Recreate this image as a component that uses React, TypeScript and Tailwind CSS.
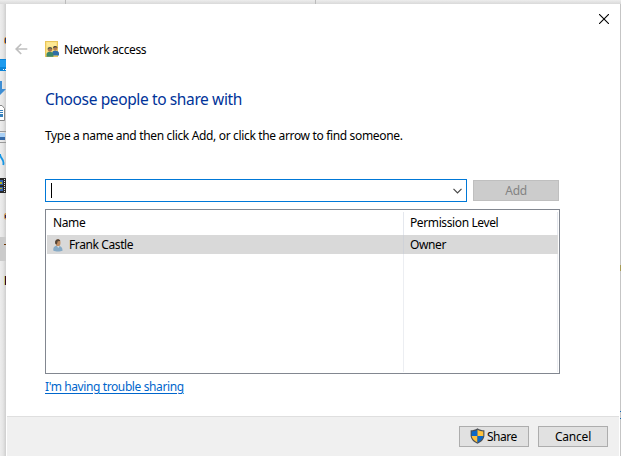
import React from "react";

function BackArrow() {
  return (
    <svg className="block h-[12px] w-[13px]" viewBox="0 0 13 12" fill="none" stroke="#bfbfbf" strokeWidth="1.7">
      <path d="M12.3 6H1.3M6.2 1L1.2 6l5 5" />
    </svg>
  );
}

function NetworkIcon() {
  return (
    <svg className="block h-4 w-[14px]" viewBox="0 0 14 16">
      <rect x=".5" y=".5" width="12" height="15" fill="#fbdf80" stroke="#e9c65a" />
      <path d="M2 1.5h9v4H2z" fill="#fde996" />
      <path d="M7.2 14.5V12.200c0-1.700 1-2.600 2.900-2.600S14 10.600 14 12.200v2.300z" fill="#2f6ea8" />
      <circle cx="10.200" cy="7.400" r="2.100" fill="#b97f50" />
      <path d="M8 7C8 4.400 12.300 4.400 12.500 7L11 6.200z" fill="#4b4a3e" />
      <path d="M1.500 15.800v-2.300c0-2 1.300-2.800 3.300-2.800s3.600.8 3.600 2.800v2.300z" fill="#3d8768" />
      <circle cx="5" cy="8.600" r="2.200" fill="#a87450" />
      <path d="M2.600 8.500C2.400 5.300 7.300 5.300 7.400 8.200L5 7.200z" fill="#4a5a4b" />
    </svg>
  );
}

function PersonIcon() {
  return (
    <svg className="block h-[14px] w-[10px]" viewBox="0 0 10 14">
      <path d="M.4 12.800c-.4-3.600 1-5 3.800-5s5.600 1.200 5.300 5c-2 1-7 1-9.100 0z" fill="#86aac6" />
      <path d="M4 8l1.200 2L6.500 8z" fill="#dfe7ec" />
      <ellipse cx="5" cy="4.800" rx="2.500" ry="3.500" fill="#bf8d63" />
      <path d="M2.100 5.500C1.300.4 6.600.2 7.300 3L4.700 3.200 3.800 6.500z" fill="#544436" />
    </svg>
  );
}

function Shield() {
  return (
    <svg className="block h-[16px] w-[15px]" viewBox="0 0 15 16">
      <path d="M7.500.3C5.500 1.800 3 2.300.6 2.300v5.200c0 3.700 3.200 6.600 6.900 8.200 3.700-1.600 6.900-4.500 6.900-8.200V2.300C12 2.300 9.500 1.800 7.500.3z" fill="#4b4f54" />
      <path d="M7.500 1.700C5.700 2.900 3.800 3.300 1.700 3.400V8h5.800z" fill="#0b68c8" />
      <path d="M7.500 1.700V8h5.800V3.400C11.200 3.300 9.300 2.900 7.500 1.700z" fill="#ffc23d" />
      <path d="M1.700 8H7.500v6.500C4.500 13 2 11 1.700 8z" fill="#ffc23d" />
      <path d="M7.500 8h5.800c-.3 3-2.800 5-5.800 6.500z" fill="#0b68c8" />
    </svg>
  );
}

function BehindIcons() {
  return (
    <svg className="block h-[452px] w-[6px]" viewBox="0 4 6 452">
      <path d="M6 37c-1.500 0-2 2-2 4s.5 3 2 3z" fill="#d88b2b" />
      <path d="M5 38h1v5H5z" fill="#293c75" />
      <path d="M0 59h6v12H0z" fill="#0a84d8" />
      <path d="M0 60h6v7H0z" fill="#1e9bee" />
      <path d="M3 69h1v1H3zM5 69h1v1H5z" fill="#fff" />
      <path d="M0 81h2v8h4l-6 6z" fill="#3e8ed4" />
      <path d="M0 105.500h2l2.500 3v12H0" fill="#fff" stroke="#888" />
      <path d="M0 110h3v1H0zM0 112h3v1H0zM0 114h3v3H0z" fill="#3681bd" />
      <path d="M0 131.500h6M0 142.500h6" stroke="#999" />
      <path d="M0 133h5v4H0z" fill="#a9d0f5" />
      <path d="M0 137h5v3H0z" fill="#3569a8" />
      <path d="M0 154c0 5 5 5 3.200 11" fill="none" stroke="#1696e4" strokeWidth="1.800" />
      <path d="M0 178h6v15H0z" fill="#292929" />
      <path d="M0 180h3v5H0zM0 187h3v4H0z" fill="#3865b0" />
      <path d="M0 182h2v2H0zM0 188h2v1H0z" fill="#b6b527" />
      <path d="M4.500 179v14" stroke="#ddd" strokeDasharray="1 1" />
      <path d="M6 213c-1.500 0-2 1.500-2 3.500s.5 3 2 3z" fill="#c9934e" />
      <path d="M5 215h1v3H5z" fill="#30205b" />
      <path d="M0 237h6v24H0z" fill="#cbcbcb" />
      <path d="M4 244h2v1H4z" fill="#6b3300" />
      <path d="M4.500 276v9" stroke="#c7c77b" />
      <path d="M5.500 276v9" stroke="#3a0820" />
    </svg>
  );
}

export default function App() {
  return (
    <div className="flex h-[456px] w-[621px] flex-col overflow-hidden bg-[#e9e9e9] font-['Noto_Sans','Open_Sans',sans-serif] text-[12px] leading-4 tracking-[-0.39px] text-black">
      <div className="flex h-1 shrink-0 bg-linear-to-b from-[#ededed] to-[#d9d9d9]">
        <div className="ml-[65px] w-[251px] border-x border-[#bbb]" />
      </div>
      <div className="flex h-[452px]">
        <div className="w-[6px] shrink-0 bg-linear-to-r from-[#ededed] via-[#e5e5e5] to-[#cecece]">
          <BehindIcons />
        </div>
        <main className="flex w-[614px] shrink-0 flex-col bg-white">
          <div className="flex h-[30px] justify-end pt-[10px] pr-[11px]">
            <svg className="block h-[10px] w-[10px]" viewBox="0 0 10 10" stroke="#000" strokeWidth="1.100">
              <path d="M0 0l10 10M10 0L0 10" />
            </svg>
          </div>
          <header className="flex h-[30px] items-center pl-[9px]">
            <BackArrow />
            <div className="ml-[17px]"><NetworkIcon /></div>
            <span className="mt-[2px] ml-[5px] whitespace-nowrap tracking-[-0.42px]">Network access</span>
          </header>
          <section className="flex h-[352px] shrink-0 flex-col pl-[39px]">
            <h1 className="mt-[25px] h-5 text-[15.5px] leading-5 whitespace-nowrap text-[#003399] tracking-[-0.38px]">Choose people to share with</h1>
            <p className="mt-[19px] h-4 whitespace-nowrap tracking-[-0.34px]">Type a name and then click Add, or click the arrow to find someone.</p>
            <div className="mt-[35px] flex h-[23px] gap-[6px]">
              <div className="flex w-[422px] items-center justify-between border border-[#0078d7] pr-1 pl-[5px]">
                <div className="h-[15px] w-px bg-black" />
                <svg className="block h-[6px] w-[9px]" viewBox="0 0 9 6" fill="none" stroke="#484848" strokeWidth="1.200">
                  <path d="M.5.8l4 4 4-4" />
                </svg>
              </div>
              <button className="my-px w-[86px] border border-[#bfbfbf] bg-[#ccc] text-[#838383]">Add</button>
            </div>
            <div className="mt-[7px] flex h-[165px] w-[515px] flex-col border border-[#828790] p-px">
              <div className="flex h-[24px] items-end">
                <div className="h-[23px] w-[357px] border-r border-[#e5e8ee] pt-[3px] pl-[6px]">Name</div>
                <div className="h-[23px] w-[154px] border-r border-[#e5e8ee] pt-[3px] pl-[6px]">Permission Level</div>
              </div>
              <div className="flex h-[19px] w-[511px] bg-[#d9d9d9]">
                <div className="flex w-[357px] items-center border-r border-[#cfd2d8] pl-[6px]">
                  <PersonIcon />
                  <span className="ml-[6px]">Frank Castle</span>
                </div>
                <div className="pt-[2px] pl-[6px]">Owner</div>
              </div>
              <div className="flex flex-1">
                <div className="w-[357px] border-r border-[#eceef2]" />
                <div className="w-[154px] border-r border-[#eceef2]" />
              </div>
            </div>
            <a className="mt-[5px] w-fit whitespace-nowrap text-[#0066cc] underline underline-offset-2">I'm having trouble sharing</a>
          </section>
          <footer className="mx-px flex h-[40px] shrink-0 items-start justify-end gap-[9px] border-t border-[#dfdfdf] bg-[#f0f0f0] pt-[9px] pr-[11px]">
            <button className="flex h-[21px] w-[70px] items-center border border-[#adadad] bg-[#e1e1e1] pl-[10px]">
              <div className="-mt-px"><Shield /></div><span className="ml-[2px] tracking-[-0.5px]">Share</span>
            </button>
            <button className="h-[21px] w-[70px] border border-[#adadad] bg-[#e1e1e1] leading-[19px] tracking-[-0.2px]">Cancel</button>
          </footer>
        </main>
        <div className="w-px shrink-0 bg-[#c5c5c5]">
          <div className="h-[261px]" />
          <div className="h-[6px] bg-[#a79b54]" />
          <div className="h-[140px]" />
          <div className="h-[8px] border-y border-[#1168b7]" />
        </div>
      </div>
    </div>
  );
}
